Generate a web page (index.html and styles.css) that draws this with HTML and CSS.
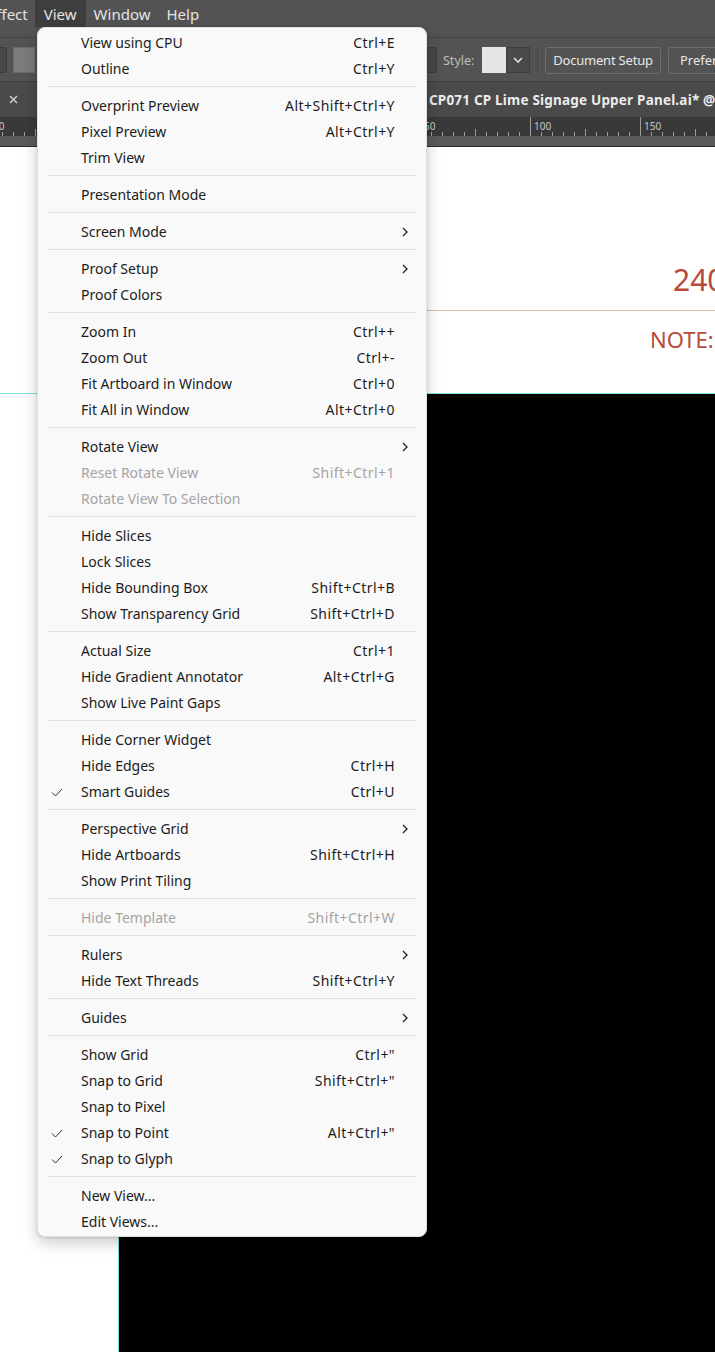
FILE: index.html
```html
<!DOCTYPE html>
<html lang="en">
<head>
<meta charset="utf-8">
<title>View menu</title>
<link rel="stylesheet" href="styles.css">
</head>
<body>
<div class="app">
  <div class="menubar">
    <span class="mb-item first">Effect</span>
    <span class="mb-item active">View</span>
    <span class="mb-item">Window</span>
    <span class="mb-item">Help</span>
  </div>

  <div class="toolbar">
    <span class="tb-btn"></span>
    <span class="tb-swatch"></span>
    <span class="tb-field"></span>
    <span class="tb-label">Style:</span>
    <span class="style-pick">
      <span class="style-swatch"></span>
      <span class="style-drop"><svg width="10" height="6" viewBox="0 0 10 6"><polyline points="1,1 5,5 9,1" fill="none" stroke="#e6e6e6" stroke-width="1.5"/></svg></span>
    </span>
    <span class="tb-divider"></span>
    <span class="tb-button doc">Document Setup</span>
    <span class="tb-button">Preferences</span>
  </div>

  <div class="tabbar">
    <svg class="tab-close" width="9" height="9" viewBox="0 0 9 9"><path d="M1 1L8 8M8 1L1 8" stroke="#c4c4c4" stroke-width="1.7"/></svg>
    <span class="tab-title">CP071 CP Lime Signage Upper Panel.ai* @ 150% (CMYK/Preview)</span>
  </div>

  <div class="ruler">
    <span class="rl first">-150</span>
    <span class="rl">-100</span>
    <span class="rl">-50</span>
    <span class="rl">0</span>
    <span class="rl">50</span>
    <span class="rl">100</span>
    <span class="rl">150</span>
  </div>
  <div class="strip"></div>

  <div class="canvas">
    <div class="board-top">
      <div class="big-num">2400</div>
      <div class="red-rule"></div>
      <div class="note">NOTE:</div>
    </div>
    <div class="board-row">
      <div class="black-board"></div>
    </div>
  </div>

  <div class="menu">
    <div class="mi"><span class="lb">View using CPU</span><span class="sc">Ctrl+E</span></div>
    <div class="mi"><span class="lb">Outline</span><span class="sc">Ctrl+Y</span></div>
    <div class="sep"></div>
    <div class="mi"><span class="lb">Overprint Preview</span><span class="sc">Alt+Shift+Ctrl+Y</span></div>
    <div class="mi"><span class="lb">Pixel Preview</span><span class="sc">Alt+Ctrl+Y</span></div>
    <div class="mi"><span class="lb">Trim View</span></div>
    <div class="sep"></div>
    <div class="mi"><span class="lb">Presentation Mode</span></div>
    <div class="sep"></div>
    <div class="mi"><span class="lb">Screen Mode</span><span class="ar"><svg width="6" height="10" viewBox="0 0 6 10"><polyline points="1,1 5,5 1,9" fill="none" stroke="#222" stroke-width="1.3"/></svg></span></div>
    <div class="sep"></div>
    <div class="mi"><span class="lb">Proof Setup</span><span class="ar"><svg width="6" height="10" viewBox="0 0 6 10"><polyline points="1,1 5,5 1,9" fill="none" stroke="#222" stroke-width="1.3"/></svg></span></div>
    <div class="mi"><span class="lb">Proof Colors</span></div>
    <div class="sep"></div>
    <div class="mi"><span class="lb">Zoom In</span><span class="sc">Ctrl++</span></div>
    <div class="mi"><span class="lb">Zoom Out</span><span class="sc">Ctrl+-</span></div>
    <div class="mi"><span class="lb">Fit Artboard in Window</span><span class="sc">Ctrl+0</span></div>
    <div class="mi"><span class="lb">Fit All in Window</span><span class="sc">Alt+Ctrl+0</span></div>
    <div class="sep"></div>
    <div class="mi"><span class="lb">Rotate View</span><span class="ar"><svg width="6" height="10" viewBox="0 0 6 10"><polyline points="1,1 5,5 1,9" fill="none" stroke="#222" stroke-width="1.3"/></svg></span></div>
    <div class="mi disabled"><span class="lb">Reset Rotate View</span><span class="sc">Shift+Ctrl+1</span></div>
    <div class="mi disabled"><span class="lb">Rotate View To Selection</span></div>
    <div class="sep"></div>
    <div class="mi"><span class="lb">Hide Slices</span></div>
    <div class="mi"><span class="lb">Lock Slices</span></div>
    <div class="mi"><span class="lb">Hide Bounding Box</span><span class="sc">Shift+Ctrl+B</span></div>
    <div class="mi"><span class="lb">Show Transparency Grid</span><span class="sc">Shift+Ctrl+D</span></div>
    <div class="sep"></div>
    <div class="mi"><span class="lb">Actual Size</span><span class="sc">Ctrl+1</span></div>
    <div class="mi"><span class="lb">Hide Gradient Annotator</span><span class="sc">Alt+Ctrl+G</span></div>
    <div class="mi"><span class="lb">Show Live Paint Gaps</span></div>
    <div class="sep"></div>
    <div class="mi"><span class="lb">Hide Corner Widget</span></div>
    <div class="mi"><span class="lb">Hide Edges</span><span class="sc">Ctrl+H</span></div>
    <div class="mi"><span class="ck"><svg width="12" height="9" viewBox="0 0 12 9"><polyline points="1,4.5 4.5,8 11,1" fill="none" stroke="#333" stroke-width="1"/></svg></span><span class="lb">Smart Guides</span><span class="sc">Ctrl+U</span></div>
    <div class="sep"></div>
    <div class="mi"><span class="lb">Perspective Grid</span><span class="ar"><svg width="6" height="10" viewBox="0 0 6 10"><polyline points="1,1 5,5 1,9" fill="none" stroke="#222" stroke-width="1.3"/></svg></span></div>
    <div class="mi"><span class="lb">Hide Artboards</span><span class="sc">Shift+Ctrl+H</span></div>
    <div class="mi"><span class="lb">Show Print Tiling</span></div>
    <div class="sep"></div>
    <div class="mi disabled"><span class="lb">Hide Template</span><span class="sc">Shift+Ctrl+W</span></div>
    <div class="sep"></div>
    <div class="mi"><span class="lb">Rulers</span><span class="ar"><svg width="6" height="10" viewBox="0 0 6 10"><polyline points="1,1 5,5 1,9" fill="none" stroke="#222" stroke-width="1.3"/></svg></span></div>
    <div class="mi"><span class="lb">Hide Text Threads</span><span class="sc">Shift+Ctrl+Y</span></div>
    <div class="sep"></div>
    <div class="mi"><span class="lb">Guides</span><span class="ar"><svg width="6" height="10" viewBox="0 0 6 10"><polyline points="1,1 5,5 1,9" fill="none" stroke="#222" stroke-width="1.3"/></svg></span></div>
    <div class="sep"></div>
    <div class="mi"><span class="lb">Show Grid</span><span class="sc">Ctrl+"</span></div>
    <div class="mi"><span class="lb">Snap to Grid</span><span class="sc">Shift+Ctrl+"</span></div>
    <div class="mi"><span class="lb">Snap to Pixel</span></div>
    <div class="mi"><span class="ck"><svg width="12" height="9" viewBox="0 0 12 9"><polyline points="1,4.5 4.5,8 11,1" fill="none" stroke="#333" stroke-width="1"/></svg></span><span class="lb">Snap to Point</span><span class="sc">Alt+Ctrl+"</span></div>
    <div class="mi"><span class="ck"><svg width="12" height="9" viewBox="0 0 12 9"><polyline points="1,4.5 4.5,8 11,1" fill="none" stroke="#333" stroke-width="1"/></svg></span><span class="lb">Snap to Glyph</span></div>
    <div class="sep"></div>
    <div class="mi"><span class="lb">New View...</span></div>
    <div class="mi"><span class="lb">Edit Views...</span></div>
  </div>
</div>
</body>
</html>
```
FILE: styles.css
```css
* { box-sizing: border-box; margin: 0; padding: 0; }
html, body { width: 715px; height: 1352px; }
body {
  margin: 0;
  background: #ffffff;
  font-family: "Noto Sans", "Open Sans", sans-serif;
  overflow: hidden;
}
.app {
  position: relative;
  width: 715px;
  height: 1352px;
  display: flex;
  flex-direction: column;
  overflow: hidden;
}

/* ---------- menu bar ---------- */
.menubar {
  flex: none;
  height: 38px;
  background: #535353;
  border-bottom: 1px solid #444444;
  display: flex;
  align-items: flex-start;
  color: #e4e4e4;
  font-size: 15px;
  white-space: nowrap;
}
.mb-item { height: 27px; line-height: 29px; padding: 0 8px; }
.mb-item.first { margin-left: -20px; }
.mb-item.active { background: #3e3e3e; padding: 0 9px; margin-left: -1px; }

/* ---------- control bar ---------- */
.toolbar {
  flex: none;
  height: 44px;
  padding-top: 1px;
  background: #535353;
  border-bottom: 1px solid #3b3b3b;
  display: flex;
  align-items: center;
  white-space: nowrap;
  overflow: hidden;
}
.tb-btn {
  flex: none;
  margin-left: -14px;
  width: 21px;
  height: 26px;
  background: #474747;
  border: 1px solid #3c3c3c;
  border-radius: 2px;
}
.tb-swatch {
  flex: none;
  margin-left: 6px;
  width: 22px;
  height: 26px;
  background: #7b7b7b;
  border: 1px solid #6b6b6b;
}
.tb-field {
  flex: none;
  margin-left: 345px;
  width: 57px;
  height: 26px;
  background: #474747;
  border: 1px solid #3d3d3d;
  border-radius: 2px;
}
.tb-label {
  flex: none;
  margin-left: 6px;
  width: 39px;
  font-size: 12.5px;
  color: #bdbdbd;
}
.style-pick {
  flex: none;
  display: flex;
  height: 26px;
}
.style-swatch { width: 24px; height: 26px; background: #e6e6e6; }
.style-drop {
  width: 24px;
  height: 26px;
  background: #4a4a4a;
  border: 1px solid #3d3d3d;
  display: flex;
  align-items: center;
  justify-content: center;
}
.tb-divider {
  flex: none;
  margin-left: 7px;
  width: 1px;
  height: 28px;
  background: #444444;
}
.tb-button {
  flex: none;
  margin-left: 7px;
  height: 27px;
  line-height: 25px;
  padding: 0 11px;
  border: 1px solid #6e6e6e;
  border-radius: 3px;
  color: #e8e8e8;
  font-size: 13px;
}
.tb-button.doc { width: 116px; text-align: center; padding: 0; letter-spacing: -0.2px; }

/* ---------- document tab ---------- */
.tabbar {
  flex: none;
  height: 35px;
  background: #4a4a4a;
  display: flex;
  align-items: center;
  white-space: nowrap;
  overflow: hidden;
}
.tab-close { flex: none; margin-left: 9px; }
.tab-title {
  flex: none;
  margin-left: 411px;
  font-weight: 700;
  font-size: 13.5px;
  letter-spacing: 0.2px;
  color: #ececec;
}

/* ---------- ruler ---------- */
.ruler {
  flex: none;
  height: 19px;
  padding-top: 2px;
  background-color: #393939;
  background-image:
    linear-gradient(to right, #9d9d9d 1px, transparent 1px),
    linear-gradient(to right, #9d9d9d 1px, transparent 1px),
    linear-gradient(to right, #9d9d9d 1px, transparent 1px);
  background-size: 110px 100%, 55px 7px, 11px 4px;
  background-position: 90px 0, 35px 100%, 2px 100%;
  background-repeat: repeat-x;
  display: flex;
  white-space: nowrap;
  overflow: hidden;
  font-size: 10px;
  color: #c6c6c6;
}
.rl { flex: none; width: 110px; line-height: 14px; }
.rl.first { margin-left: -16px; }

.strip {
  flex: none;
  height: 11px;
  background: #5a5a5a;
  border-bottom: 1px solid #2d2d2d;
}

/* ---------- canvas ---------- */
.canvas {
  flex: 1;
  background: #ffffff;
  display: flex;
  flex-direction: column;
  overflow: hidden;
}
.board-top {
  flex: none;
  height: 247px;
  border-bottom: 1px solid #7fdde4;
  white-space: nowrap;
}
.big-num {
  margin-top: 115px;
  padding-left: 673px;
  font-size: 30px;
  line-height: 36px;
  color: #b84a3b;
}
.red-rule {
  margin-top: 12px;
  margin-left: 300px;
  height: 1px;
  background: #e8b9b4;
}
.note {
  margin-top: 14px;
  padding-left: 650px;
  font-size: 22px;
  line-height: 28px;
  color: #b84a3b;
}
.board-row { flex: 1; display: flex; }
.black-board {
  flex: 1;
  margin-left: 118px;
  background: #000000;
  border-left: 1px solid #7fdde4;
}

/* ---------- dropdown menu ---------- */
.menu {
  position: absolute;
  left: 37px;
  top: 27px;
  width: 390px;
  background: #f9f9f9;
  border: 1px solid #e2e2e2;
  border-radius: 8px;
  padding: 1px 0 2px;
  box-shadow: 0 6px 16px rgba(0, 0, 0, 0.2), 0 1px 3px rgba(0, 0, 0, 0.12);
  font-size: 14px;
  color: #1c1c1c;
  white-space: nowrap;
}
.mi {
  display: grid;
  grid-template-columns: 43px 1fr auto 31px;
  height: 26px;
  padding-top: 2px;
  align-items: center;
  line-height: 24px;
}
.mi .ck { grid-column: 1; grid-row: 1; margin-left: 13px; display: flex; }
.mi .lb { grid-column: 2; grid-row: 1; }
.mi .sc { grid-column: 3; grid-row: 1; letter-spacing: 0.45px; }
.mi .ar { grid-column: 4; grid-row: 1; margin-left: 7px; display: flex; }
.mi.disabled { color: #a4a4a4; }
.sep {
  height: 1px;
  background: #e0e0e0;
  margin: 5px 10px 5px 9px;
}
```
